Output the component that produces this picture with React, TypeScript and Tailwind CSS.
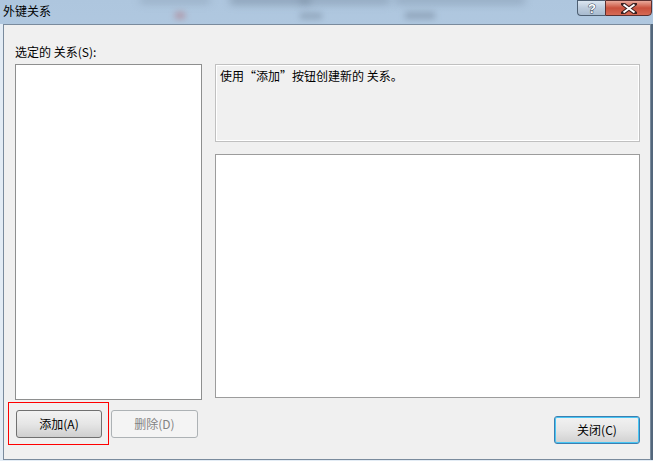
import React from "react";

const font = { fontFamily: '"Noto Sans CJK SC", "Noto Sans", sans-serif' };

export default function App() {
  return (
    <div
      className="relative w-[653px] h-[461px] flex flex-col overflow-hidden bg-gradient-to-b from-[#aec6de] via-[#bcd4ec] to-[#c3dbf2] text-[12px] text-black"
      style={font}
    >
      {/* blurred glass decoration */}
      <div className="absolute left-[230px] top-[-4px] w-[80px] h-[8px] bg-[#6f8297] blur-[4px] opacity-60" />
      <div className="absolute left-[300px] top-[-4px] w-[90px] h-[8px] bg-[#6f8297] blur-[4px] opacity-50" />
      <div className="absolute left-[140px] top-[-3px] w-[70px] h-[6px] bg-[#7b8ea3] blur-[4px] opacity-50" />
      <div className="absolute left-[395px] top-[-4px] w-[130px] h-[8px] bg-[#6a7d92] blur-[4px] opacity-40" />
      <div className="absolute left-[300px] top-[13px] w-[22px] h-[6px] bg-[#7b8ea3] blur-[3px] opacity-60" />
      <div className="absolute left-[405px] top-[12px] w-[30px] h-[7px] bg-[#7b8ea3] blur-[3px] opacity-60" />
      <div className="absolute left-[175px] top-[12px] w-[10px] h-[7px] bg-[#b07a86] blur-[3px] opacity-60" />

      {/* title bar */}
      <div className="relative h-[24px] flex items-start shrink-0">
        <span className="ml-[3px] mt-[3px] text-[12px] leading-[16px] text-black">外键关系</span>
        <div className="ml-auto flex h-[16px] mr-[1px]">
          <div className="w-[28px] h-[16px] border border-[#4e5f72] border-r-0 rounded-bl-[4px] bg-gradient-to-b from-[#dbe6f1] via-[#bccbdc] to-[#a8bbcf] flex items-center justify-center">
            <svg width="12" height="14" viewBox="0 0 12 14">
              <text x="6" y="12" textAnchor="middle" fontSize="13" fontWeight="bold" fontFamily="Liberation Sans, sans-serif" fill="#fff" stroke="#3a4a5c" strokeWidth="1" paintOrder="stroke">?</text>
            </svg>
          </div>
          <div className="w-[47px] h-[16px] border border-[#5a3030] rounded-br-[4px] bg-gradient-to-b from-[#e9a99b] via-[#c9503c] to-[#d66a55] flex items-center justify-center">
            <svg width="16" height="11" viewBox="0 0 16 11">
              <path d="M2 1 L14 10 M14 1 L2 10" stroke="#3a2020" strokeWidth="4" strokeLinecap="square" />
              <path d="M2.5 1.5 L13.5 9.5 M13.5 1.5 L2.5 9.5" stroke="#fff" strokeWidth="2" />
            </svg>
          </div>
        </div>
      </div>

      {/* window body with frame */}
      <div className="relative flex-1 flex pl-[3px] pb-[1px] bg-[#e3ecf5]">
        <div className="flex-1 flex border border-[#7a8b9d] bg-[#f0f0f0] pl-[11px] pr-[10px] pt-[19px]">
          {/* left column */}
          <div className="w-[187px] flex flex-col">
            <div className="h-[16px] leading-[16px]">选定的 关系(S):</div>
            <div className="mt-[4px] h-[336px] bg-white border border-[#8e8f8f]" />
            <div className="relative mt-[10px] flex gap-[9px] pl-[1px]">
              <div className="absolute left-[-7px] top-[-8px] w-[101px] h-[43px] border border-[#ff0000]" />
              <button className="w-[86px] h-[28px] rounded-[3px] border border-[#707070] bg-gradient-to-b from-[#f2f2f2] via-[#e6e6e6] to-[#cfcfcf] flex items-center justify-center text-[12px] text-black leading-none">
                添加(A)
              </button>
              <button className="w-[87px] h-[28px] rounded-[3px] border border-[#adb2b5] bg-[#f4f4f4] flex items-center justify-center text-[12px] text-[#838383] leading-none">
                删除(D)
              </button>
            </div>
          </div>
          {/* right column */}
          <div className="ml-[13px] w-[425px] flex flex-col">
            <div className="mt-[20px] h-[78px] border border-[#c0c0c0] bg-[#f0f0f0] px-[4px] pt-[3px] leading-[16px] shadow-[inset_0_0_0_1px_#ffffff]">
              使用“添加”按钮创建新的 关系。
            </div>
            <div className="mt-[12px] h-[244px] bg-white border border-[#9c9c9c]" />
            <div className="mt-[18px] self-end">
              <button className="w-[86px] h-[28px] rounded-[3px] border border-[#3c7fb1] shadow-[inset_0_0_0_1px_#48c6f4] bg-gradient-to-b from-[#f2f2f2] via-[#e6e6e6] to-[#d0d0d0] flex items-center justify-center text-[12px] text-black leading-none">
                关闭(C)
              </button>
            </div>
          </div>
        </div>
        <div className="w-[2px] bg-[#53677c]" />
      </div>
    </div>
  );
}
